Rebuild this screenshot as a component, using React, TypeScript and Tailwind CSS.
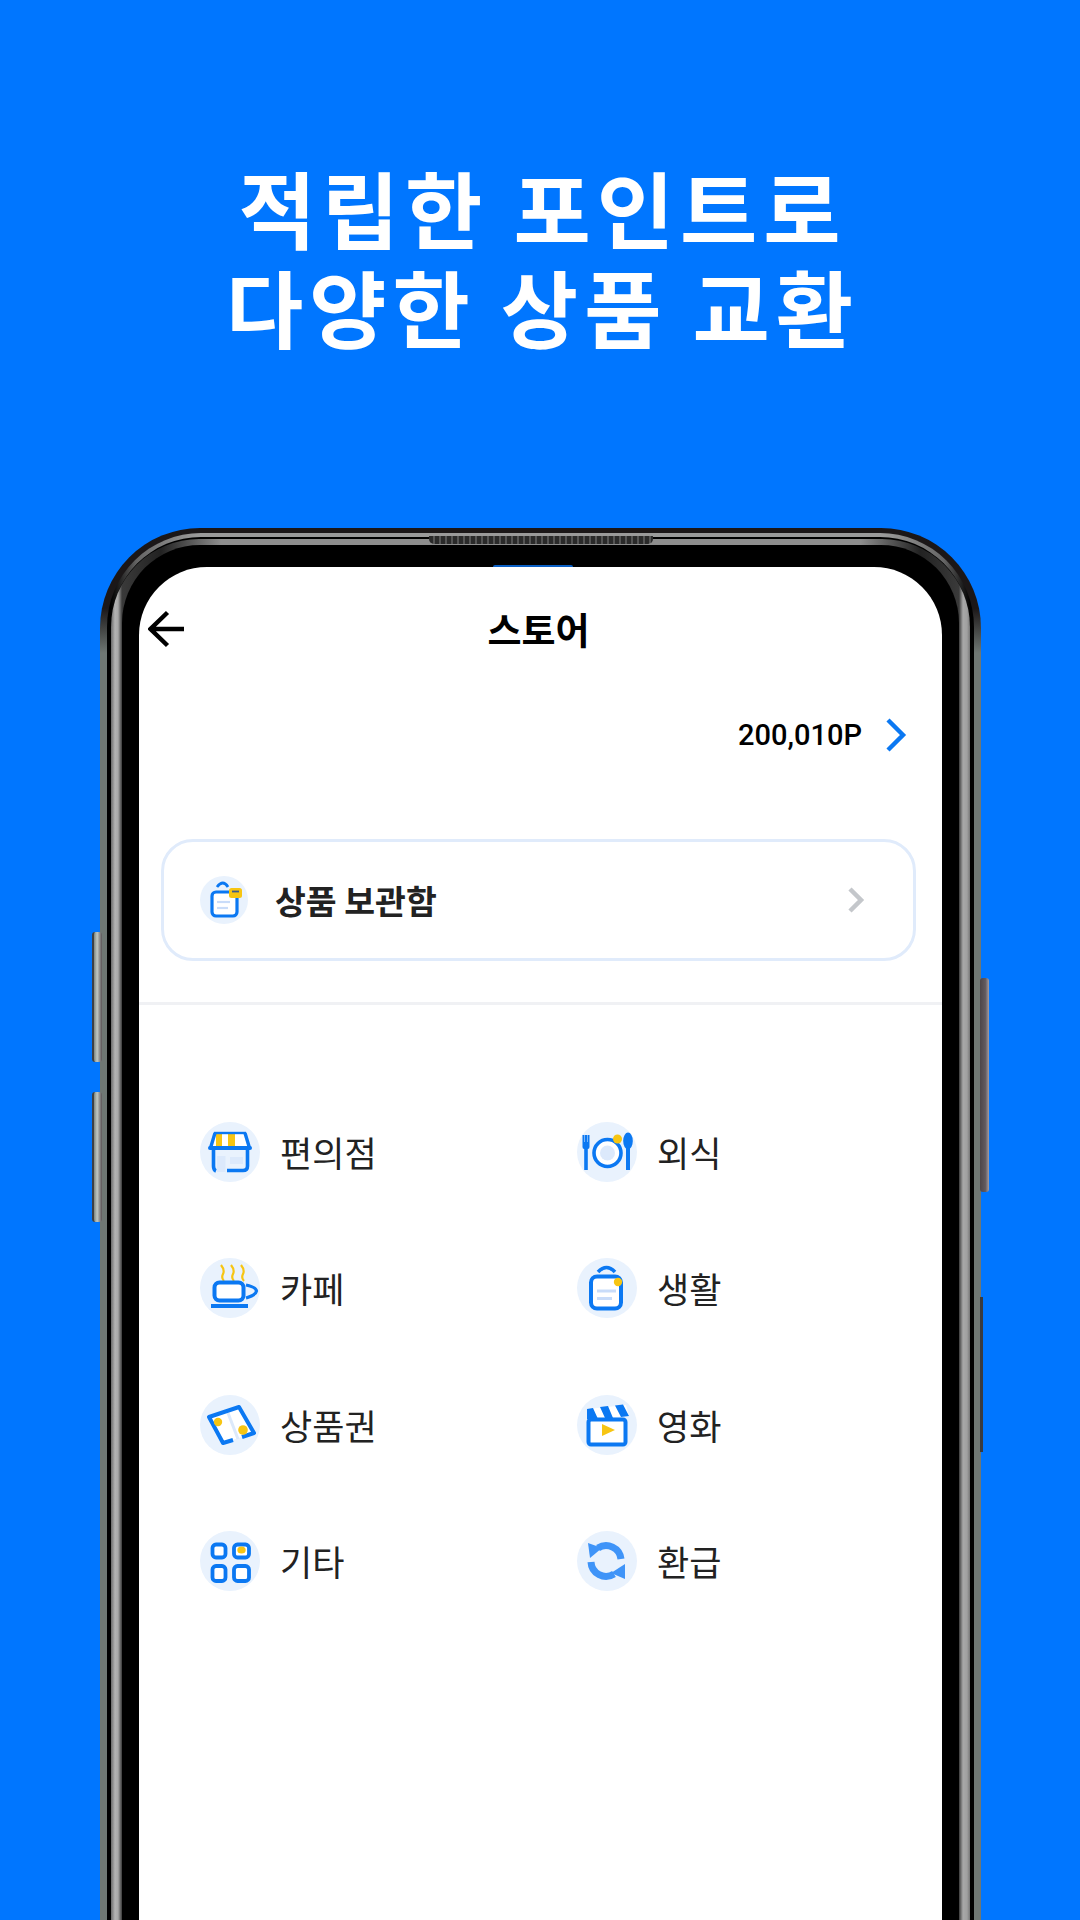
const B = "#0b78f2";
const LB = "#dce9fb";
const Y = "#f7c512";

function Store() {
  return (
    <svg width="60" height="60" viewBox="0 0 60 60" fill="none">
      <path d="M15 11H45L50 26H10Z" fill="#fff" />
      <path d="M16 11H22V25H16Z" fill={Y} />
      <path d="M28 11H35V25H28Z" fill={Y} />
      <path d="M14 11H46" stroke={B} strokeWidth="2.4" />
      <path d="M15 11L10.5 26M45 11L49.5 26" stroke={B} strokeWidth="3.4" />
      <path d="M10 26H50" stroke={B} strokeWidth="4" strokeLinecap="round" />
      <rect x="17" y="34" width="8.5" height="16" fill={LB} />
      <rect x="30" y="35" width="13" height="7" fill={LB} />
      <path d="M13.5 27V44Q13.5 48 16 49" stroke={B} strokeWidth="3.6" />
      <path d="M27 48.5H43Q47.5 48.5 47.5 44V27" stroke={B} strokeWidth="3.6" />
    </svg>
  );
}
function Cup() {
  return (
    <svg width="60" height="60" viewBox="0 0 60 60" fill="none">
      <path d="M21 7Q25 12 23 16T24 23M31 7Q35 12 33 16T34 23M41 7Q45 12 43 16T44 23" stroke={Y} strokeWidth="2.2" />
      <rect x="14.5" y="24.5" width="29" height="18" rx="5" fill="#fff" stroke={B} strokeWidth="4" />
      <path d="M46 27Q56 29 56.5 33Q56 37 46 40" stroke={B} strokeWidth="3.2" />
      <rect x="11" y="46" width="37" height="4" fill={B} />
    </svg>
  );
}
function Voucher() {
  return (
    <svg width="60" height="60" viewBox="0 0 60 60" fill="none">
      <path d="M9 22L39 12L54 38L23 48Z" fill="#fff" />
      <path d="M28 18L38 44" stroke={LB} strokeWidth="3" />
      <path d="M33 45L23 48L9 22L39 12L54 38L42 42" stroke={B} strokeWidth="4" strokeLinejoin="round" />
      <circle cx="18" cy="27" r="4.2" fill={Y} />
      <circle cx="43" cy="35" r="4.8" fill={Y} />
    </svg>
  );
}
function Grid4() {
  return (
    <svg width="60" height="60" viewBox="0 0 60 60" fill="none">
      <g stroke={B} strokeWidth="3.8" fill="#fff">
        <rect x="12.5" y="13.5" width="13" height="13" rx="3.5" />
        <rect x="34" y="13.5" width="15" height="13" rx="3.5" />
        <rect x="12.5" y="35" width="13" height="15" rx="3.5" />
        <rect x="34" y="35" width="15" height="15" rx="3.5" />
      </g>
      <ellipse cx="41.5" cy="19" rx="4.2" ry="3.5" fill={Y} />
    </svg>
  );
}
function Dining() {
  return (
    <svg width="60" height="60" viewBox="0 0 60 60" fill="none">
      <path d="M5.5 13H7.5V20H8V13H10V20H10.5V13H12.5V25Q12.5 27 10.8 27V48H7.2V27Q5.5 27 5.5 25Z" fill={B} />
      <circle cx="30.5" cy="31" r="13.5" fill="#fff" stroke={B} strokeWidth="3.6" />
      <circle cx="30.5" cy="31" r="7.5" fill={LB} />
      <circle cx="40.5" cy="17" r="4.5" fill={Y} />
      <ellipse cx="51" cy="19" rx="4.8" ry="8.5" fill={B} />
      <rect x="49" y="24" width="4" height="24" fill={B} />
    </svg>
  );
}
function Bag() {
  return (
    <svg width="60" height="60" viewBox="0 0 60 60" fill="none">
      <path d="M21 14Q29.5 5 38 14" stroke={B} strokeWidth="3.6" />
      <rect x="14" y="18.5" width="30" height="32" rx="6" fill="#fff" stroke={B} strokeWidth="4" />
      <path d="M20 33H39" stroke="#c9dcf9" strokeWidth="3" />
      <path d="M20 40.5H35" stroke="#c9dcf9" strokeWidth="3" />
      <circle cx="41" cy="24" r="4.2" fill={Y} />
    </svg>
  );
}
function Film() {
  return (
    <svg width="60" height="60" viewBox="0 0 60 60" fill="none">
      <path d="M11 14L49 10L52 21L11 24Z" fill="#fff" />
      <path d="M10 14L16 13L21 24H10ZM23 12L31 11L36 23H28ZM38 10.5L46 9.5L52 21L44 22Z" fill={B} />
      <rect x="11.5" y="24.5" width="37" height="25" rx="2.5" fill="#fff" stroke={B} strokeWidth="4" />
      <path d="M25 29L38 35L25 41Z" fill={Y} />
    </svg>
  );
}
function Refund() {
  const c = "#3f94f8";
  return (
    <svg width="60" height="60" viewBox="0 0 60 60" fill="none">
      <path d="M21 17A15 15 0 0 1 44 28" stroke={c} strokeWidth="7" />
      <path d="M37 43A15 15 0 0 1 14 31" stroke={c} strokeWidth="7" />
      <path d="M11 12L25 17L13 27Z" fill={c} />
      <path d="M48 48L34 42L48 33Z" fill={c} />
    </svg>
  );
}
function Locker() {
  return (
    <svg width="48" height="48" viewBox="0 0 48 48" fill="none">
      <path d="M17 11Q23 3 28 11" stroke={B} strokeWidth="2.8" />
      <rect x="12" y="16" width="25" height="24" rx="4" fill="#fff" stroke={B} strokeWidth="3.2" />
      <path d="M17 26H30" stroke="#c9dcf9" strokeWidth="2.2" />
      <path d="M17 32H28" stroke="#c9dcf9" strokeWidth="2.2" />
      <rect x="29" y="12" width="13" height="10" rx="2.5" fill={Y} />
      <path d="M32 15.5H39" stroke="#3a5a8c" strokeWidth="1.8" />
    </svg>
  );
}

const items = [
  { label: "편의점", Icon: Store },
  { label: "외식", Icon: Dining },
  { label: "카페", Icon: Cup },
  { label: "생활", Icon: Bag },
  { label: "상품권", Icon: Voucher },
  { label: "영화", Icon: Film },
  { label: "기타", Icon: Grid4 },
  { label: "환급", Icon: Refund },
];

export default function App() {
  return (
    <div className="w-[1080px] h-[1920px] overflow-hidden bg-[#0076ff] font-['Noto_Sans_CJK_KR',sans-serif]">
      <h1 className="pt-[157px] pl-[5px] h-[528px] text-center text-white font-bold text-[84px] leading-[99px] tracking-[6px]">
        적립한 포인트로
        <br />
        다양한 상품 교환
      </h1>

      {/* phone */}
      <div className="relative ml-[100px] w-[881px] h-[1500px]">
        <div className="absolute left-[-8px] top-[404px] w-[10px] h-[130px] rounded-[3px] border-l-2 border-[#3c4044] bg-[linear-gradient(90deg,#7d8781,#c0c8c2_40%,#5c5558)]" />
        <div className="absolute left-[-8px] top-[564px] w-[10px] h-[130px] rounded-[3px] border-l-2 border-[#3c4044] bg-[linear-gradient(90deg,#7d8781,#c0c8c2_40%,#5c5558)]" />
        <div className="absolute right-[-8px] top-[450px] w-[9px] h-[214px] rounded-[3px] bg-[linear-gradient(90deg,#4e4649,#625a5e_60%,#a49ea6)]" />
        <div className="absolute right-[-2px] top-[769px] w-[3px] h-[155px] bg-[#3b3b3d]" />

        <div className="h-full rounded-t-[100px] pt-[5px] px-[7px] bg-[linear-gradient(180deg,#1b1718_0,#1b1718_80px,#6f7773_125px)]">
          <div className="h-full rounded-t-[94px] pt-[4px] px-[4px] bg-[linear-gradient(90deg,#000_0,#000_4px,#666_30px,#9a9a9a_90px,#9a9a9a_calc(100%-90px),#666_calc(100%-30px),#000_calc(100%-4px),#000_100%)]">
            <div className="h-full rounded-t-[90px] pt-[2px] bg-black">
              <div className="h-full rounded-t-[88px] pt-[6px] px-[11px] bg-[linear-gradient(90deg,#6a6a6a_0,#b3b3b3_4px,#a8a8a8_7px,#3a3a3a_11px,#222_50px,#8e8e8e_110px,#8e8e8e_calc(100%-110px),#222_calc(100%-50px),#3a3a3a_calc(100%-11px),#a8a8a8_calc(100%-7px),#a0a0a0_calc(100%-3px),#777_100%)]">
                <div className="h-full rounded-t-[78px] pt-[22px] px-[17px] bg-black">
                  <div className="relative h-full rounded-t-[68px] bg-white">
                    <div className="absolute left-[354px] top-[-2px] w-[80px] h-[2px] rounded-t-[2px] bg-[#0a5fc4]" />
                    <div className="grid grid-cols-[1fr_auto_1fr] items-center h-[124px]">
                      <svg className="ml-[9px]" width="38" height="38" viewBox="0 0 38 38" fill="none">
                        <path d="M2 19H36M19.5 2.5L2.5 19L19.5 35.5" stroke="#000" strokeWidth="4.4" />
                      </svg>
                      <div className="text-[37px] leading-[50px] font-bold text-black mr-[4px]">스토어</div>
                      <div />
                    </div>
                    <div className="flex items-center justify-end h-[88px] pr-[35px]">
                      <span className="mt-[2px] font-['Roboto',sans-serif] font-medium text-[29px] text-black">200,010P</span>
                      <svg className="ml-[23px]" width="22" height="34" viewBox="0 0 22 34" fill="none">
                        <path d="M3 2L18 17L3 32" stroke="#0b78f2" strokeWidth="4.4" />
                      </svg>
                    </div>
                    <div className="mt-[60px] ml-[22px] mr-[26px] h-[122px] rounded-[32px] border-[3px] border-[#e0ebfb] flex items-center pl-[36px] pr-[47px]">
                      <div className="w-[48px] h-[48px] rounded-full bg-[#e9f2fd]">
                        <Locker />
                      </div>
                      <span className="ml-[27px] flex-1 text-[33.5px] font-bold text-[#222222]">상품 보관함</span>
                      <svg width="20" height="28" viewBox="0 0 20 28" fill="none">
                        <path d="M4 3L15 14L4 25" stroke="#c4c7cb" strokeWidth="4.5" />
                      </svg>
                    </div>
                    <div className="mt-[41px] h-[3px] bg-[#f0f1f4]" />
                    <div className="mt-[117px] pl-[61px] grid grid-cols-[377px_1fr] gap-y-[76.4px]">
                      {items.map(({ label, Icon }) => (
                        <div key={label} className="flex items-center h-[60px]">
                          <div className="w-[60px] h-[60px] rounded-full bg-[#e9f2fd]">
                            <Icon />
                          </div>
                          <span className="ml-[20px] text-[35px] text-[#222222]">{label}</span>
                        </div>
                      ))}
                    </div>
                  </div>
                </div>
              </div>
            </div>
          </div>
        </div>

        <div className="absolute left-[329px] top-[8px] w-[224px] h-[8px] rounded-b-[5px] bg-[repeating-linear-gradient(90deg,#2a2a2a_0,#2a2a2a_4px,#555_4px,#555_6px)]" />
      </div>
    </div>
  );
}
